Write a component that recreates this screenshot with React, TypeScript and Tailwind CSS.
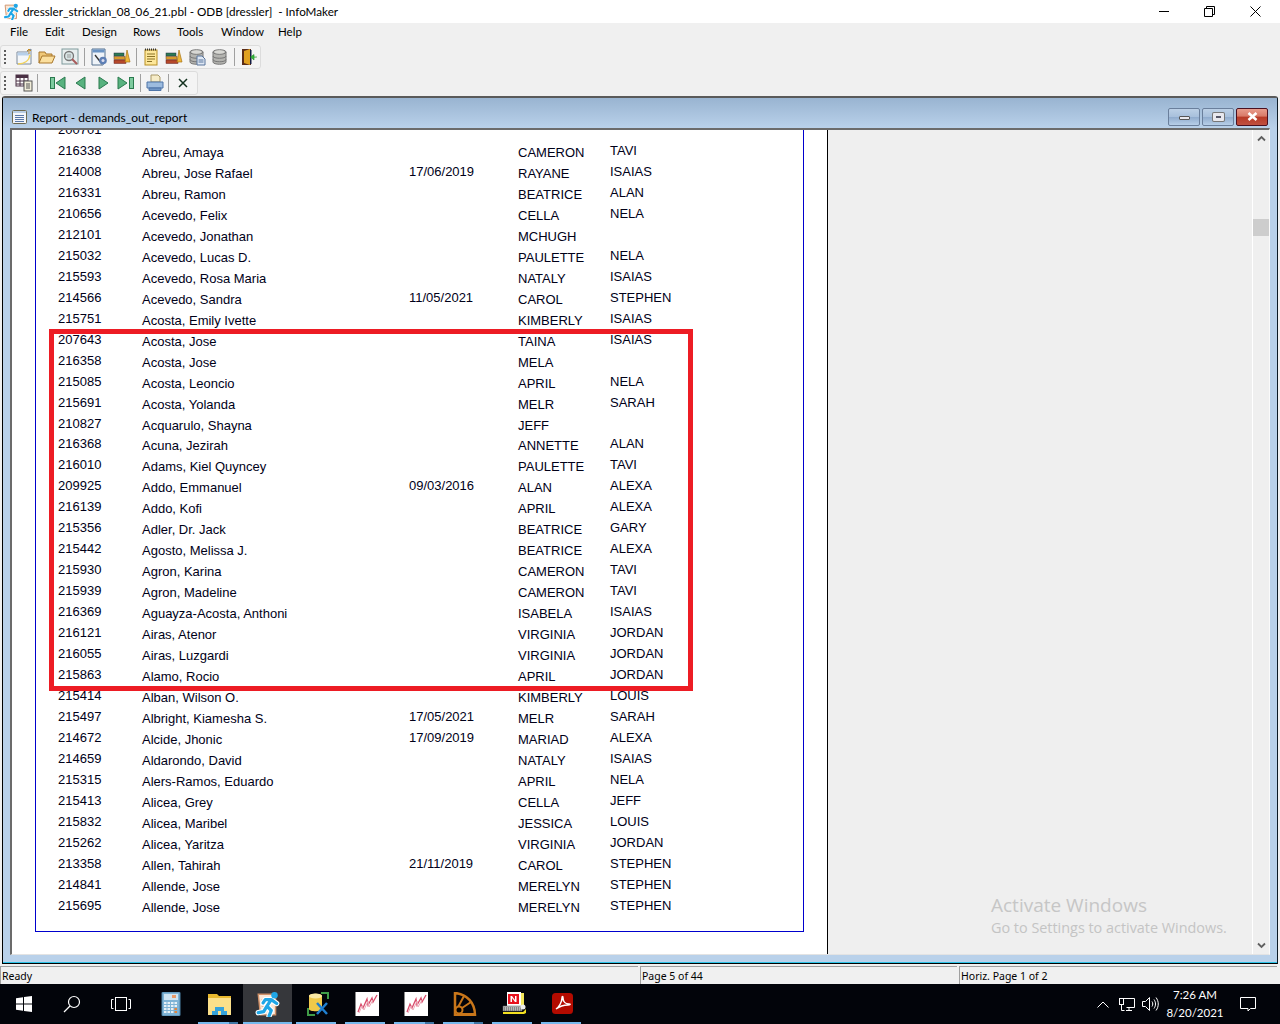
import React from "react";

const rows: [string, string, string, string, string][] = [
  ["200701", "", "", "", ""],
  ["216338", "Abreu, Amaya", "", "CAMERON", "TAVI"],
  ["214008", "Abreu, Jose Rafael", "17/06/2019", "RAYANE", "ISAIAS"],
  ["216331", "Abreu, Ramon", "", "BEATRICE", "ALAN"],
  ["210656", "Acevedo, Felix", "", "CELLA", "NELA"],
  ["212101", "Acevedo, Jonathan", "", "MCHUGH", ""],
  ["215032", "Acevedo, Lucas D.", "", "PAULETTE", "NELA"],
  ["215593", "Acevedo, Rosa Maria", "", "NATALY", "ISAIAS"],
  ["214566", "Acevedo, Sandra", "11/05/2021", "CAROL", "STEPHEN"],
  ["215751", "Acosta, Emily Ivette", "", "KIMBERLY", "ISAIAS"],
  ["207643", "Acosta, Jose", "", "TAINA", "ISAIAS"],
  ["216358", "Acosta, Jose", "", "MELA", ""],
  ["215085", "Acosta, Leoncio", "", "APRIL", "NELA"],
  ["215691", "Acosta, Yolanda", "", "MELR", "SARAH"],
  ["210827", "Acquarulo, Shayna", "", "JEFF", ""],
  ["216368", "Acuna, Jezirah", "", "ANNETTE", "ALAN"],
  ["216010", "Adams, Kiel Quyncey", "", "PAULETTE", "TAVI"],
  ["209925", "Addo, Emmanuel", "09/03/2016", "ALAN", "ALEXA"],
  ["216139", "Addo, Kofi", "", "APRIL", "ALEXA"],
  ["215356", "Adler, Dr. Jack", "", "BEATRICE", "GARY"],
  ["215442", "Agosto, Melissa J.", "", "BEATRICE", "ALEXA"],
  ["215930", "Agron, Karina", "", "CAMERON", "TAVI"],
  ["215939", "Agron, Madeline", "", "CAMERON", "TAVI"],
  ["216369", "Aguayza-Acosta, Anthoni", "", "ISABELA", "ISAIAS"],
  ["216121", "Airas, Atenor", "", "VIRGINIA", "JORDAN"],
  ["216055", "Airas, Luzgardi", "", "VIRGINIA", "JORDAN"],
  ["215863", "Alamo, Rocio", "", "APRIL", "JORDAN"],
  ["215414", "Alban, Wilson O.", "", "KIMBERLY", "LOUIS"],
  ["215497", "Albright, Kiamesha S.", "17/05/2021", "MELR", "SARAH"],
  ["214672", "Alcide, Jhonic", "17/09/2019", "MARIAD", "ALEXA"],
  ["214659", "Aldarondo, David", "", "NATALY", "ISAIAS"],
  ["215315", "Alers-Ramos, Eduardo", "", "APRIL", "NELA"],
  ["215413", "Alicea, Grey", "", "CELLA", "JEFF"],
  ["215832", "Alicea, Maribel", "", "JESSICA", "LOUIS"],
  ["215262", "Alicea, Yaritza", "", "VIRGINIA", "JORDAN"],
  ["213358", "Allen, Tahirah", "21/11/2019", "CAROL", "STEPHEN"],
  ["214841", "Allende, Jose", "", "MERELYN", "STEPHEN"],
  ["215695", "Allende, Jose", "", "MERELYN", "STEPHEN"],
];

const Svg = ({ s = 18, v = 18, children }: { s?: number; v?: number; children: React.ReactNode }) => (
  <svg width={s} height={s} viewBox={`0 0 ${v} ${v}`} className="block shrink-0">
    {children}
  </svg>
);

const Runner = ({ s = 16 }: { s?: number }) => (
  <svg width={s} height={s} viewBox="0 0 24 24" className="block shrink-0">
    <path d="M3 3h13l3 3v16H5z" fill="#f9e6d6" stroke="#cf9068" strokeWidth="1.300" />
    <path d="M6 8h7M6 11h5M6 14h4" stroke="#dba888" strokeWidth="1" />
    <g fill="none" stroke="#ffffff" strokeWidth="5" strokeLinecap="round" strokeLinejoin="round">
      <path d="M15 8l-4 6M15 8l5 3.500M15 8H9.500l-2 3M11 14l4 4-2 5M11 14l-3 5-5 1" />
    </g>
    <g fill="none" stroke="#1fa6e6" strokeWidth="3" strokeLinecap="round" strokeLinejoin="round">
      <path d="M15 8l-4 6M15 8l5 3.500M15 8H9.500l-2 3M11 14l4 4-2 5M11 14l-3 5-5 1" />
    </g>
    <circle cx="18" cy="4" r="3" fill="#1fa6e6" />
  </svg>
);

const Grip = () => (
  <div className="flex w-[11px] shrink-0 flex-col items-center gap-[2px] pr-[3px]">
    {[0, 1, 2, 3].map((i) => (
      <div key={i} className="h-[2px] w-[2px] bg-[#5c5c5c]" />
    ))}
  </div>
);

const Btn = ({ children }: { children: React.ReactNode }) => (
  <div className="flex h-[22px] w-[23px] shrink-0 items-center justify-center">{children}</div>
);

const Sep = ({ w = "w-[6px]" }: { w?: string }) => (
  <div className={`flex h-[18px] shrink-0 justify-center ${w}`}>
    <div className="h-full w-px bg-[#a0a0a0]" />
  </div>
);

const Db = ({ doc = false }: { doc?: boolean }) => (
  <Svg>
    <path d="M2 4c0-3 13-3 13 0v10c0 3-13 3-13 0z" fill="#b4b4b0" stroke="#777" />
    <path d="M2 4c0 3 13 3 13 0M2 8c0 3 13 3 13 0M2 11.500c0 3 13 3 13 0" fill="none" stroke="#777" />
    <ellipse cx="8.500" cy="4" rx="5" ry="1.700" fill="#d8d8d4" />
    {doc && <path d="M9 8h5l3 3v6H9z" fill="#dfe8f4" stroke="#58749c" />}
    {doc && <path d="M10.500 12h5M10.500 14h5" stroke="#58749c" />}
  </Svg>
);

const Books = () => (
  <Svg>
    <rect x="1" y="5" width="10" height="3" fill="#2c7a55" stroke="#234" strokeWidth=".5" />
    <rect x="1" y="8.500" width="11" height="3" fill="#d89a2c" stroke="#643" strokeWidth=".5" />
    <rect x="1" y="12" width="12" height="3.500" fill="#b5482a" stroke="#622" strokeWidth=".5" />
    <path d="M12 14L14 2l3 12z" fill="#f0b73a" stroke="#a87414" strokeWidth=".7" />
  </Svg>
);

const Nav = ({ dir, bar }: { dir: "l" | "r"; bar?: boolean }) => {
  const tri = dir === "l" ? (bar ? "M17 3v12L8 9z" : "M14 3v12L5 9z") : bar ? "M1 3v12l9-6z" : "M5 3v12l9-6z";
  const bx = dir === "l" ? 2 : 12;
  return (
    <Svg>
      <path d={tri} fill="#58b27f" stroke="#2a7a4f" />
      {bar && <rect x={bx + 0.5} y="3.500" width="4" height="11" fill="#7ecb9f" stroke="#2a7a4f" />}
    </Svg>
  );
};

const Chart = () => (
  <svg width="24" height="24" viewBox="0 0 24 24" className="block">
    <rect width="24" height="24" fill="#fff" />
    <rect width="1" height="24" fill="#888" />
    <path d="M3 20l3-8 2 4 4-9 1 6 4-7 1 4 4-7" fill="none" stroke="#d84a6a" strokeWidth="1.300" />
    <path d="M4 21l3-7 2 4 4-9 1 6 4-7" fill="none" stroke="#eda8b8" strokeWidth="1" />
  </svg>
);

const taskIcons: { key: string; node: React.ReactNode; line?: "plain" | "stack" | "active" }[] = [
  {
    key: "calc",
    node: (
      <svg width="24" height="24" viewBox="0 0 24 24" className="block">
        <rect x="3" y="0" width="18" height="24" rx="1" fill="#7fb3d5" stroke="#4d83a8" />
        <rect x="5" y="2" width="14" height="6" fill="#cfe4f2" />
        <rect x="13" y="3" width="4" height="3" fill="#e79a6b" />
        {[10, 13, 16, 19].map((y) =>
          [5, 8.500, 12, 15.500].map((x) => (
            <rect key={`${x}-${y}`} x={x} y={y} width="2.500" height="2" fill={x > 15 && y > 15 ? "#e2853f" : "#e6f0f6"} />
          ))
        )}
      </svg>
    ),
  },
  {
    key: "folder",
    line: "stack",
    node: (
      <svg width="24" height="24" viewBox="0 0 24 24" className="block">
        <path d="M0 2h9l2 2h12v19H0z" fill="#e8b92f" />
        <rect x="0" y="6" width="23" height="17" fill="#fbe08a" />
        <path d="M7 19v-4h9v4h3v4H4v-4z" fill="#35a3dc" />
        <rect x="10" y="19" width="3" height="4" fill="#fbe08a" />
      </svg>
    ),
  },
  { key: "im", line: "active", node: <Runner s={26} /> },
  {
    key: "db",
    line: "plain",
    node: (
      <svg width="24" height="24" viewBox="0 0 24 24" className="block">
        <path d="M3 4c0-3 13-3 13 0v13c0 3-13 3-13 0z" fill="#f0c94a" />
        <ellipse cx="9.500" cy="4" rx="6.500" ry="2.500" fill="#fbeaa5" />
        <path d="M15 1h7v6M2 16v7h7" fill="none" stroke="#3f9b47" strokeWidth="2" />
        <path d="M11 22l10-11M21 22L11 11" stroke="#1f7fd0" strokeWidth="2.500" />
      </svg>
    ),
  },
  { key: "c1", line: "plain", node: <Chart /> },
  { key: "c2", line: "stack", node: <Chart /> },
  {
    key: "dw",
    line: "stack",
    node: (
      <svg width="24" height="24" viewBox="0 0 24 24" className="block">
        <path d="M2 1v22h20C22 11 14 2 2 1z" fill="none" stroke="#c8761a" strokeWidth="2.500" />
        <path d="M4 17L11 4M6 18L18 10M8 22h14" stroke="#c8761a" strokeWidth="2" />
        <circle cx="6" cy="18" r="3.500" fill="#000" stroke="#c8761a" strokeWidth="2" />
      </svg>
    ),
  },
  {
    key: "nw",
    line: "plain",
    node: (
      <svg width="24" height="24" viewBox="0 0 24 24" className="block">
        <rect x="5" y="0" width="14" height="14" fill="#fff" />
        <rect x="6" y="2" width="11" height="10" fill="#e8101c" />
        <path d="M8.500 10V4h1.500l3 4V4h1.500v6H13l-3-4v4z" fill="#fff" />
        <rect x="19" y="1" width="3" height="13" fill="#f3e65a" />
        <path d="M1 14h19v5H1z" fill="#b8b8b8" stroke="#666" strokeWidth=".5" />
        <path d="M2 16h17M2 18h17" stroke="#555" strokeDasharray="1 1" />
        <path d="M1 20h20l3-3v4l-2 1H1z" fill="#f3e020" />
        <circle cx="21" cy="15" r="2.500" fill="#eee" />
      </svg>
    ),
  },
  {
    key: "pdf",
    line: "plain",
    node: (
      <svg width="24" height="24" viewBox="0 0 24 24" className="block">
        <rect x="1" y="1" width="21" height="21" rx="3.500" fill="#b30b00" />
        <path d="M5 17c3-2 6-7 6-11 0-2 1-2 1 0 0 4 3 6 6 6 2 0 1 1-1 1-4 0-8 1-12 4z" fill="none" stroke="#fff" strokeWidth="1.500" />
      </svg>
    ),
  },
];

const WinBtn = ({ red, children }: { red?: boolean; children: React.ReactNode }) => (
  <div
    className={`flex h-[18px] w-[32px] items-center justify-center rounded-[2px] border ${
      red
        ? "border-[#4a1020] bg-[linear-gradient(#e89c8c_0%,#d87a68_45%,#b83a26_50%,#c05040_100%)]"
        : "border-[#6a7f9c] bg-[linear-gradient(#bcd0e6_0%,#a8c0dc_48%,#8fabcd_50%,#b7cfe8_100%)]"
    }`}
  >
    {children}
  </div>
);

export default function App() {
  const ui = { fontFamily: 'Lato, "Open Sans", sans-serif' };
  const open = { fontFamily: '"Open Sans", "Noto Sans", sans-serif' };
  const tahoma = { fontFamily: '"Noto Sans", "Open Sans", sans-serif' };
  const arial = { fontFamily: '"Liberation Sans", Arial, sans-serif' };
  return (
    <div className="flex h-[1024px] w-[1280px] flex-col overflow-hidden bg-[#f0f0f0] text-black">
      {/* Title bar */}
      <div className="flex h-[23px] shrink-0 items-center bg-white pl-[3px]">
        <Runner s={17} />
        <div className="ml-[3px] whitespace-pre text-[11.700px]" style={ui}>
          {"dressler_stricklan_08_06_21.pbl - ODB [dressler]  - InfoMaker"}
        </div>
        <div className="ml-auto flex h-full items-center pr-[2px]">
          <div className="flex w-[46px] justify-center pl-[2px]">
            <div className="h-px w-[10px] bg-black" />
          </div>
          <div className="flex w-[46px] justify-center">
            <svg width="11" height="11" viewBox="0 0 11 11" className="block">
              <path d="M.5 2.500h8v8h-8zM2.500 2.500v-2h8v8h-2" fill="none" stroke="#000" />
            </svg>
          </div>
          <div className="flex w-[46px] justify-center">
            <svg width="11" height="11" viewBox="0 0 11 11" className="block">
              <path d="M.5.5l10 10M10.500.5l-10 10" stroke="#000" />
            </svg>
          </div>
        </div>
      </div>

      {/* Menu */}
      <div className="flex h-[20px] shrink-0 items-center pb-[2px] pl-[10px] text-[11.500px]" style={ui}>
        <span className="w-[35px]">File</span>
        <span className="w-[37px]">Edit</span>
        <span className="w-[51px]">Design</span>
        <span className="w-[44px]">Rows</span>
        <span className="w-[44px]">Tools</span>
        <span className="w-[57px]">Window</span>
        <span>Help</span>
      </div>

      {/* Toolbars */}
      <div className="flex h-[53px] shrink-0 flex-col gap-[2px] pt-[2px]">
        <div className="flex h-[24px] w-[261px] items-center rounded-[3px] border border-[#dcdcdc] bg-[#f4f4f4]">
          <Grip />
          <Btn>
            <Svg>
              <path d="M2 4h10l4-3v15H2z" fill="#f4f7fa" stroke="#7d8a9a" />
              <rect x="2.500" y="4.500" width="12" height="3" fill="#b7d0ea" />
              <path d="M3 16c6 0 11-3 12-9" fill="none" stroke="#f2d25a" strokeWidth="1.500" />
              <path d="M14 1v5M12 3l2-2 2 2" fill="none" stroke="#c08a2a" />
            </Svg>
          </Btn>
          <Btn>
            <Svg>
              <path d="M1 15V4h6l1 2h6v2" fill="#f0c878" stroke="#a8772c" />
              <path d="M1 15l3-7h13l-3 7z" fill="#fbdf9e" stroke="#a8772c" />
            </Svg>
          </Btn>
          <Btn>
            <Svg>
              <rect x="1" y="1" width="16" height="15" fill="#e8eeee" stroke="#7e9a9c" />
              <circle cx="8" cy="8" r="4.500" fill="#d8e4e4" stroke="#777" strokeWidth="1.300" />
              <path d="M11 11l5 5" stroke="#a85a5a" strokeWidth="2" />
              <path d="M6 7h4M6 9h4" stroke="#999" />
            </Svg>
          </Btn>
          <Sep />
          <Btn>
            <Svg>
              <path d="M2 1h13v10l-2 6H2z" fill="#eef3f8" stroke="#55708f" />
              <rect x="2.500" y="1.500" width="12" height="3" fill="#6a94c4" />
              <path d="M5 7l7 9" stroke="#333" strokeWidth="1.300" />
              <circle cx="13" cy="12.500" r="3.800" fill="#5d7fb5" />
              <circle cx="13" cy="12.500" r="1.500" fill="#dde" />
            </Svg>
          </Btn>
          <Btn>
            <Books />
          </Btn>
          <Sep />
          <Btn>
            <Svg>
              <rect x="3" y="2" width="12" height="15" fill="#fde79a" stroke="#b98f22" />
              <path d="M3 1.500h12" stroke="#333" strokeDasharray="1 1" strokeWidth="2" />
              <path d="M5 6h8M5 8.500h8M5 11h8M5 13.500h5" stroke="#8a7226" />
            </Svg>
          </Btn>
          <Btn>
            <Books />
          </Btn>
          <Btn>
            <Db doc />
          </Btn>
          <Btn>
            <Db />
          </Btn>
          <Sep />
          <Btn>
            <Svg>
              <rect x="2" y="1" width="9" height="16" fill="#5a2c18" />
              <path d="M4 3l6-2v16l-6-2z" fill="#e0a020" />
              <rect x="10" y="2" width="1.500" height="14" fill="#141c44" />
              <path d="M17 9h-3V6.500L10.500 9l3.500 3V9.500" fill="#36b83c" stroke="#1e8a26" strokeWidth=".6" />
            </Svg>
          </Btn>
        </div>
        <div className="flex h-[24px] w-[198px] items-center rounded-[3px] border border-[#dcdcdc] bg-[#f4f4f4]">
          <Grip />
          <Btn>
            <Svg>
              <rect x="1" y="1" width="12" height="11" fill="#fff" stroke="#4a3044" />
              <rect x="1" y="1" width="12" height="3" fill="#4a3044" />
              <path d="M1 7h12M1 10h12M5 4v8M9 4v8" stroke="#4a3044" />
              <rect x="9" y="7" width="8" height="10" fill="#f2eeda" stroke="#555" />
              <path d="M11 10h4M11 12h4M11 14h4" stroke="#555" />
            </Svg>
          </Btn>
          <Sep w="w-[5px] mr-[5px]" />
          <Btn>
            <Nav dir="l" bar />
          </Btn>
          <Btn>
            <Nav dir="l" />
          </Btn>
          <Btn>
            <Nav dir="r" />
          </Btn>
          <Btn>
            <Nav dir="r" bar />
          </Btn>
          <Sep w="w-[6px]" />
          <Btn>
            <Svg>
              <path d="M5 1h7l2 2v5H5z" fill="#f6ecc8" stroke="#a89868" />
              <path d="M1 8h16v6H1z" fill="#9dbcdf" stroke="#4f75a8" />
              <path d="M3 14h12v2.500H3z" fill="#6f95c5" stroke="#4f75a8" />
            </Svg>
          </Btn>
          <Sep w="w-[5px]" />
          <Btn>
            <svg width="10" height="10" viewBox="0 0 10 10" className="block">
              <path d="M1 1l8 8M9 1L1 9" stroke="#12301e" strokeWidth="1.500" />
            </svg>
          </Btn>
        </div>
      </div>

      {/* MDI area */}
      <div className="flex h-[870px] shrink-0 flex-col px-[2px] pb-[2px]">
        <div className="flex flex-1 flex-col overflow-hidden rounded-t-[3px] border border-t-2 border-black border-t-[#5a5a5a] border-r-[#0c1a24] bg-[#b9d1ea]">
          {/* Child title */}
          <div className="flex h-[30px] shrink-0 items-center bg-[linear-gradient(#99b4d1,#b9d1ea)] pl-[9px] pr-[9px] pt-[7px]">
            <svg width="16" height="16" viewBox="0 0 16 16" className="block shrink-0">
              <rect x=".5" y="1.500" width="14" height="13" rx="1" fill="#f4f6fa" stroke="#6e6a50" />
              <rect x="1" y="2" width="13" height="2" fill="#b9cde4" />
              <path d="M3 6.500h9M3 8.500h9M3 10.500h9M3 12.500h9" stroke="#5a78a8" />
            </svg>
            <div className="ml-[4px] mt-[2px] text-[12px]" style={ui}>
              Report - demands_out_report
            </div>
            <div className="ml-auto flex gap-[2px]">
              <WinBtn>
                <div className="mt-[3px] h-[4px] w-[11px] rounded-[1px] border border-[#555] bg-[#e8e8ee]" />
              </WinBtn>
              <WinBtn>
                <div className="flex h-[8px] w-[11px] items-center justify-center rounded-[1px] bg-[#e8e8ee] ring-1 ring-[#777]">
                  <div className="h-[2px] w-[5px] bg-[#556]" />
                </div>
              </WinBtn>
              <WinBtn red>
                <svg width="11" height="9" viewBox="0 0 11 9" className="block">
                  <path d="M1.500 1l8 7M9.500 1l-8 7" stroke="#fff" strokeWidth="2.600" />
                </svg>
              </WinBtn>
            </div>
          </div>
          {/* Client */}
          <div className="mx-[7px] flex min-h-0 flex-1 border-b border-l-2 border-r border-t-2 border-b-[#e3e3e3] border-l-[#6b6b6b] border-r-[#fafafa] border-t-[#6b6b6b]">
            {/* Report */}
            <div className="relative h-full w-[816px] shrink-0 overflow-hidden border-r border-black bg-white">
              <div className="ml-[23px] mt-[-11px] w-[769px] border-b border-l border-r border-[#0000cd] pb-[15px] pl-[22px] text-[13px]" style={arial}>
                {rows.map((r) => (
                  <div key={r[0]} className={`flex leading-[21px] text-[#000018] ${r[0] === "210827" ? "h-[20px]" : "h-[21px]"}`}>
                    <div className="w-[84px]">{r[0]}</div>
                    <div className="w-[267px] pt-[2px]">{r[1]}</div>
                    <div className="w-[109px]">{r[2]}</div>
                    <div className="w-[92px] pt-[2px]">{r[3]}</div>
                    <div>{r[4]}</div>
                  </div>
                ))}
              </div>
              {/* Red annotation */}
              <div className="absolute left-[37px] top-[199px] h-[362px] w-[644px] border-[5px] border-[#ed1c24]" />
            </div>
            {/* Empty grey */}
            <div className="relative flex-1 bg-[#efefef]">
              <div className="absolute left-[163px] top-[762px] whitespace-nowrap text-[19px] leading-[26px] text-[#c6c6c6]" style={open}>
                Activate Windows
              </div>
              <div className="absolute left-[163px] top-[788px] whitespace-nowrap text-[14.400px] leading-[20px] text-[#c4c4c4]" style={open}>
                Go to Settings to activate Windows.
              </div>
            </div>
            {/* Scrollbar */}
            <div className="flex w-[17px] shrink-0 flex-col border-l border-white bg-[#efefef]">
              <div className="flex h-[16px] items-center justify-center">
                <svg width="9" height="7" viewBox="0 0 9 7" className="block">
                  <path d="M1 5.500l3.500-3.500 3.500 3.500" fill="none" stroke="#606060" strokeWidth="1.800" />
                </svg>
              </div>
              <div className="mt-[73px] h-[17px] bg-[#cdcdcd]" />
              <div className="flex-1" />
              <div className="flex h-[17px] items-center justify-center">
                <svg width="9" height="7" viewBox="0 0 9 7" className="block">
                  <path d="M1 1.500l3.500 3.500 3.500-3.500" fill="none" stroke="#606060" strokeWidth="1.800" />
                </svg>
              </div>
            </div>
          </div>
          <div className="h-[7px] shrink-0" />
          <div className="h-px shrink-0 bg-[#2ec4e8]" />
        </div>
      </div>

      {/* Status bar */}
      <div className="flex h-[18px] shrink-0 gap-[2px] text-[10.500px] leading-[18px]" style={tahoma}>
        <div className="w-[638px] border-l border-t border-[#a0a0a0] pl-px">Ready</div>
        <div className="w-[317px] border-l border-t border-[#a0a0a0] pl-px">Page 5 of 44</div>
        <div className="w-[318px] border-l border-t border-[#a0a0a0] pl-px">Horiz. Page 1 of 2</div>
      </div>

      {/* Taskbar */}
      <div className="flex h-[40px] shrink-0 items-stretch bg-[#02040a] text-white">
        <div className="flex w-[48px] items-center justify-center">
          <svg width="16" height="16" viewBox="0 0 16 16" className="block">
            <path d="M0 2.200l7-1V7.500H0zM8 1l8-1v7.500H8zM0 8.500h7v6.300l-7-1zM8 8.500h8V16l-8-1.100z" fill="#fff" />
          </svg>
        </div>
        <div className="flex w-[48px] items-center justify-center">
          <svg width="18" height="18" viewBox="0 0 18 18" className="block">
            <circle cx="11" cy="7" r="5.500" fill="none" stroke="#fff" strokeWidth="1.200" />
            <path d="M7 11l-6 6" stroke="#fff" strokeWidth="1.300" />
          </svg>
        </div>
        <div className="flex w-[49px] items-center justify-center">
          <svg width="20" height="14" viewBox="0 0 20 14" className="block">
            <rect x="4.500" y=".5" width="11" height="13" fill="none" stroke="#fff" />
            <path d="M2.500 2.500H.5v9h2M17.500 2.500h2v9h-2" fill="none" stroke="#fff" />
          </svg>
        </div>
        {taskIcons.map((t) => (
          <div key={t.key} className={`relative flex w-[49px] items-center justify-center ${t.line === "active" ? "bg-[#36373b]" : "pl-[2px]"}`}>
            {t.node}
            {t.line === "active" && <div className="absolute bottom-0 left-0 right-0 h-[2px] bg-[#76b9ed]" />}
            {t.line === "plain" && <div className="absolute bottom-0 left-[4px] right-[5px] h-[2px] bg-[#76b9ed]" />}
            {t.line === "stack" && (
              <div className="absolute bottom-0 left-[4px] right-[5px] flex h-[2px]">
                <div className="flex-1 bg-[#76b9ed]" />
                <div className="w-[9px] bg-[#3f76a4]" />
              </div>
            )}
          </div>
        ))}
        <div className="ml-auto flex items-center pr-[8px]">
          <svg width="12" height="7" viewBox="0 0 12 7" className="mr-[10px] block">
            <path d="M.5 6.500L6 1l5.500 5.500" fill="none" stroke="#fff" />
          </svg>
          <svg width="16" height="16" viewBox="0 0 16 16" className="mr-[7px] block">
            <path d="M4.500 2.500h11v9h-8M4.500 2.500v1M7 14.500h6M10 11.500v3" fill="none" stroke="#fff" />
            <rect x=".5" y="2.500" width="4" height="6" fill="#02040a" stroke="#fff" />
            <path d="M2.500 8.500v6h3" fill="none" stroke="#fff" />
          </svg>
          <svg width="17" height="16" viewBox="0 0 17 16" className="mr-[8px] block">
            <path d="M.5 5.500h3l4-4v13l-4-4h-3z" fill="none" stroke="#fff" />
            <path d="M10 5.500c1 1.500 1 3.500 0 5M12 3.500c2 3 2 6 0 9M14 1.500c3 4 3 9 0 13" fill="none" stroke="#fff" />
          </svg>
          <div className="flex w-[56px] flex-col items-center whitespace-nowrap text-[11.500px] leading-[18px]" style={ui}>
            <div>7:26 AM</div>
            <div>8/20/2021</div>
          </div>
          <div className="flex w-[49px] items-center justify-center">
            <svg width="16" height="16" viewBox="0 0 16 16" className="block">
              <path d="M.5 1.500h15v11h-5l-2.500 2.500v-2.500H.5z" fill="none" stroke="#fff" />
            </svg>
          </div>
        </div>
      </div>
    </div>
  );
}
